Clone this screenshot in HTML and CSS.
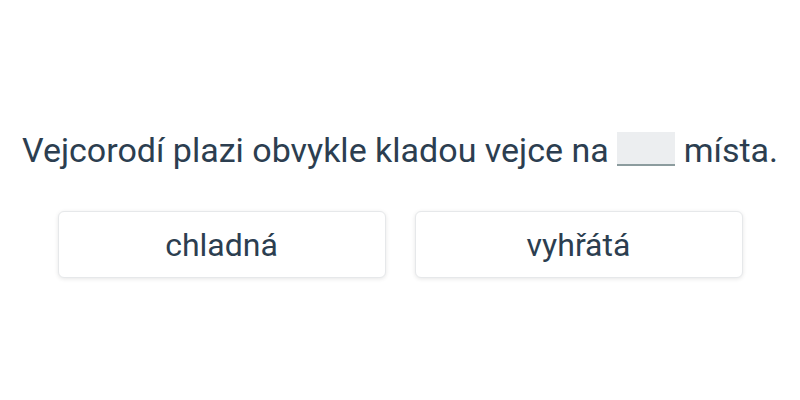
FILE: index.html
```html
<!DOCTYPE html>
<html lang="cs">
<head>
<meta charset="utf-8">
<link rel="stylesheet" href="styles.css">
</head>
<body>
<main class="quiz">
  <p class="question">Vejcorodí plazi obvykle kladou vejce na <span class="blank"></span> místa.</p>
  <div class="options">
    <button class="option">chladná</button>
    <button class="option">vyhřátá</button>
  </div>
</main>
</body>
</html>
```
FILE: styles.css
```css
html, body {
  margin: 0;
  padding: 0;
  background: #ffffff;
}
body {
  width: 800px;
  height: 400px;
  font-family: Roboto, "Liberation Sans", sans-serif;
  color: #2c3e50;
}
.quiz {
  display: flex;
  flex-direction: column;
  align-items: center;
  padding-top: 126px;
}
.question {
  margin: 0;
  font-size: 34px;
  line-height: 48px;
  text-align: center;
}
.blank {
  display: inline-block;
  width: 58px;
  height: 32px;
  background: #eceef0;
  border-bottom: 2px solid #8c9c9e;
  vertical-align: -4px;
}
.options {
  display: flex;
  gap: 29px;
  margin-top: 37px;
}
.option {
  width: 328px;
  height: 67px;
  background: #ffffff;
  border: 1px solid #e6e8ea;
  border-radius: 6px;
  box-shadow: 0 1px 4px rgba(0,0,0,0.10);
  font-family: Roboto, "Liberation Sans", sans-serif;
  font-size: 32px;
  color: #2c3e50;
  padding: 0;
}
```
